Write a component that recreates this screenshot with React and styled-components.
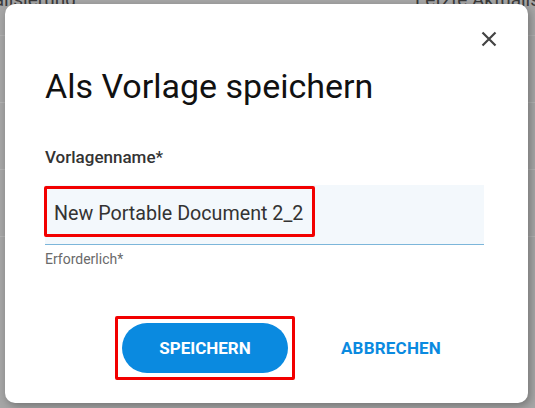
import React from "react";
import styled, { createGlobalStyle } from "styled-components";

const GlobalStyle = createGlobalStyle`
  html, body {
    margin: 0;
    padding: 0;
    background: #a4a4a4;
    font-family: Roboto, "Liberation Sans", Arial, sans-serif;
  }
`;

const Page = styled.div`
  position: relative;
  width: 535px;
  height: 408px;
  overflow: hidden;
  background: #a6a6a6;
`;

const BgHeader = styled.div`
  display: grid;
  grid-template-columns: 415px 1fr;
  margin-top: -11px;
  height: 46px;
  border-bottom: 1px solid #b0b0b0;
  font-size: 19px;
  line-height: 22px;
  color: #3a3a3a;
  white-space: nowrap;
  overflow: hidden;
`;

const BgCell = styled.div`
  margin-left: ${(p) => p.offset || 0}px;
`;

const BgRow = styled.div`
  height: 66px;
  border-bottom: 1px solid #b2b2b2;
`;

const Overlay = styled.div`
  position: absolute;
  inset: 0;
  padding: 4px 7px 5px 5px;
`;

const Dialog = styled.div`
  position: relative;
  box-sizing: border-box;
  width: 523px;
  height: 399px;
  background: #fff;
  border-radius: 10px;
  box-shadow: 2px 3px 8px rgba(0, 0, 0, 0.3);
  padding: 23px 27px 0 40px;
  display: flex;
  flex-direction: column;
`;

const CloseRow = styled.div`
  display: flex;
  justify-content: flex-end;
`;

const CloseButton = styled.button`
  width: 24px;
  height: 24px;
  padding: 0;
  border: 0;
  background: none;
  display: flex;
  align-items: center;
  justify-content: center;
  color: #444;
`;

const Body = styled.div`
  padding-right: 17px;
  display: flex;
  flex-direction: column;
`;

const Title = styled.h2`
  margin: 15px 0 0;
  font-size: 34px;
  line-height: 40px;
  font-weight: 400;
  color: #111;
`;

const Label = styled.div`
  margin-top: 41px;
  font-size: 17px;
  line-height: 20px;
  font-weight: 500;
  color: #333;
`;

const Field = styled.div`
  margin-top: 18px;
  height: 59px;
  box-sizing: content-box;
  background: #f3f8fc;
  border-bottom: 1px solid #7cb6da;
  display: flex;
  align-items: flex-start;
`;

const Mark = styled.div`
  display: inline-flex;
  border: 3px solid #f20000;
  border-radius: 2px;
  padding: ${(p) => p.pad};
  margin: ${(p) => p.margin || 0};
`;

const FieldText = styled.span`
  font-size: 19.7px;
  line-height: 24px;
  color: #333;
  white-space: nowrap;
`;

const Hint = styled.div`
  margin-top: 6px;
  font-size: 14px;
  line-height: 17px;
  color: #6a6a6a;
`;

const Actions = styled.div`
  margin-top: 48px;
  padding-left: 70px;
  display: flex;
  align-items: center;
  gap: 46px;
`;

const Button = styled.button`
  font-family: Roboto, "Liberation Sans", Arial, sans-serif;
  font-size: 17px;
  font-weight: 700;
  text-transform: uppercase;
  border: 0;
  cursor: pointer;
  padding: 0;
  height: 50px;
  ${(p) =>
    p.primary
      ? `
    width: 166px;
    border-radius: 25px;
    background: #0a8ae0;
    color: #fff;
  `
      : `
    background: none;
    color: #0a8ae0;
    letter-spacing: 0.2px;
  `}
`;

export default function App() {
  return (
    <>
      <GlobalStyle />
      <Page>
        <BgHeader>
          <BgCell offset={-45}>Aktualisierung</BgCell>
          <BgCell>Letzte Aktualisierung</BgCell>
        </BgHeader>
        <BgRow />
        <BgRow />
        <BgRow />
        <Overlay>
          <Dialog>
            <CloseRow>
              <CloseButton aria-label="close">
                <svg width="24" height="24" viewBox="0 0 24 24">
                  <path
                    d="M5.5 5.5 L18.5 18.5 M18.5 5.5 L5.5 18.5"
                    stroke="#444"
                    strokeWidth="2.2"
                    fill="none"
                  />
                </svg>
              </CloseButton>
            </CloseRow>
            <Body>
              <Title>Als Vorlage speichern</Title>
              <Label>Vorlagenname*</Label>
              <Field>
                <Mark pad="13px 9px 8px 7px" margin="1px 0 0 -1px">
                  <FieldText>New Portable Document 2_2</FieldText>
                </Mark>
              </Field>
              <Hint>Erforderlich*</Hint>
              <Actions>
                <Mark pad="4px">
                  <Button primary>Speichern</Button>
                </Mark>
                <Button>Abbrechen</Button>
              </Actions>
            </Body>
          </Dialog>
        </Overlay>
      </Page>
    </>
  );
}
